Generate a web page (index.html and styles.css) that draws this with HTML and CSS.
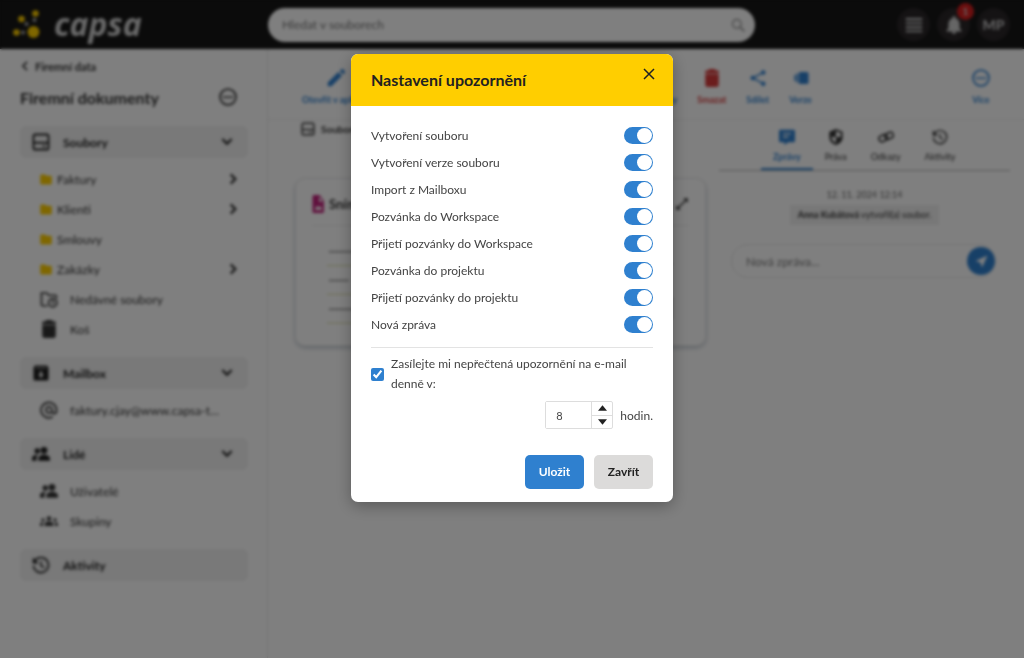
FILE: index.html
```html
<!DOCTYPE html>
<html lang="cs">
<head>
    <meta charset="UTF-8">
    <meta name="viewport" content="width=device-width, initial-scale=1.0">
    <title>Capsa – Nastavení upozornění</title>
    <link rel="stylesheet" href="styles.css">
</head>
<body>
    <!-- shared icons -->
    <svg class="sprite" aria-hidden="true">
        <symbol id="i-down" viewBox="0 0 24 24"><path d="M4 7l8 8 8-8" fill="none" stroke="currentColor" stroke-width="3.5"/></symbol>
        <symbol id="i-right" viewBox="0 0 24 24"><path d="M8 4l8 8-8 8" fill="none" stroke="currentColor" stroke-width="4"/></symbol>
        <symbol id="i-left" viewBox="0 0 24 24"><path d="M17 2L7 12l10 10" fill="none" stroke="currentColor" stroke-width="4"/></symbol>
        <symbol id="i-more" viewBox="0 0 24 24"><circle cx="12" cy="12" r="10.5" fill="none" stroke="currentColor" stroke-width="2.4"/><path d="M6 10.5h3v3H6zM10.500 10.500h3v3h-3zM15 10.500h3v3h-3z"/></symbol>
        <symbol id="i-drive" viewBox="0 0 24 24"><rect x="2" y="2" width="20" height="20" rx="2.500" fill="none" stroke="currentColor" stroke-width="2.500"/><path d="M2 13h20" stroke="currentColor" stroke-width="2.500"/><path d="M14 16.500h4v2h-4z"/></symbol>
        <symbol id="i-folder" viewBox="0 0 24 24"><path d="M10 2H3a2.500 2.500 0 0 0-2.500 2.500v15A2.500 2.500 0 0 0 3 22h18a2.500 2.500 0 0 0 2.500-2.500V7A2.500 2.500 0 0 0 21 4.500h-8z"/></symbol>
        <symbol id="i-recent" viewBox="0 0 24 24"><path d="M10 21H4a2 2 0 0 1-2-2V4h7l2.500 3H20a2 2 0 0 1 2 2v2" fill="none" stroke="currentColor" stroke-width="2.200"/><circle cx="17" cy="17" r="5.500" fill="none" stroke="currentColor" stroke-width="2.200"/><path d="M17 13.500V17l2 1.500" fill="none" stroke="currentColor" stroke-width="1.800"/></symbol>
        <symbol id="i-trash" viewBox="0 0 24 24"><path d="M8 0h8l1 2h4v4H3V2h4zM3 7h18v14a3 3 0 0 1-3 3H6a3 3 0 0 1-3-3z"/></symbol>
        <symbol id="i-mailbox" viewBox="0 0 24 24"><path fill-rule="evenodd" d="M4 2h16l2 3v15a2 2 0 0 1-2 2H4a2 2 0 0 1-2-2V5zM5 4.500h14v1H5zM10.500 10v4H8l4 4.500 4-4.500h-2.500v-4z"/></symbol>
        <symbol id="i-at" viewBox="0 0 24 24"><path d="M17 21a10.300 10.300 0 1 1 5-9v1.500a3 3 0 0 1-6 0V12a4 4 0 1 0-1.500 3" fill="none" stroke="currentColor" stroke-width="2.300"/></symbol>
        <symbol id="i-people" viewBox="0 0 24 24"><circle cx="16" cy="7" r="4.500"/><circle cx="7" cy="8" r="3.600"/><path d="M8.500 21v-3c0-3 4-5 7.500-5s8 2 8 5v3zM0 21v-3c0-3 3-5 8-5-1.500 1.200-2 3-2 5v3z"/></symbol>
        <symbol id="i-groups" viewBox="0 0 24 24"><circle cx="12" cy="8.500" r="3"/><circle cx="4" cy="10.500" r="2.200"/><circle cx="20" cy="10.500" r="2.200"/><path d="M6 18.500v-2c0-2.500 3-4 6-4s6 1.500 6 4v2zM0 18.500v-2c0-2 2-3 4.500-3-.6 1-.8 2-.8 5zM24 18.500v-2c0-2-2-3-4.500-3 .6 1 .8 2 .8 5z"/></symbol>
        <symbol id="i-history" viewBox="0 0 24 24"><path d="M4 6a10 10 0 1 1-2 7" fill="none" stroke="currentColor" stroke-width="2.200"/><path d="M1 2v8h8z"/><path d="M12 7v6l4.500 2.500" fill="none" stroke="currentColor" stroke-width="2"/></symbol>
    </svg>

    <header class="topbar">
        <a class="logo" href="#">
            <svg class="logo-mark" viewBox="0 0 28 30" aria-hidden="true">
                <g fill="#ffce00"><circle cx="21" cy="22" r="6"/><circle cx="9" cy="9" r="3.300"/><circle cx="23" cy="3.500" r="3.300"/><circle cx="4" cy="22.500" r="3.300"/></g>
                <g fill="#aaa"><circle cx="14" cy="14" r="2"/><circle cx="22" cy="10" r="2"/><circle cx="10.500" cy="22.500" r="2"/></g>
            </svg>
            <span class="logo-text">capsa</span>
        </a>
        <form class="search">
            <input type="search" placeholder="Hledat v souborech" aria-label="Hledat v souborech">
            <svg class="icon" viewBox="0 0 24 24" aria-hidden="true"><circle cx="10" cy="10" r="7.500" fill="none" stroke="currentColor" stroke-width="2.500"/><path d="M15.500 15.500L23 23" stroke="currentColor" stroke-width="3"/></svg>
        </form>
        <div class="user-actions">
            <button class="round" aria-label="Menu"><svg viewBox="0 0 24 24"><path d="M1 4h22M1 9.500h22M1 15h22M1 20.500h22" stroke="currentColor" stroke-width="2.500"/></svg></button>
            <button class="round" aria-label="Upozornění"><svg viewBox="0 0 24 24"><path d="M12 24a3 3 0 0 0 3-3H9a3 3 0 0 0 3 3zm7.500-7.500V11c0-4-2-7-5.500-8V2a2 2 0 0 0-4 0v1C6.500 4 4.500 7 4.500 11v5.500L2 19v1.500h20V19z"/></svg><span class="badge">1</span></button>
            <button class="round">MP</button>
        </div>
    </header>

    <div class="layout">
        <aside class="sidebar">
            <a class="back" href="#"><svg class="icon small"><use href="#i-left"/></svg>Firemní data</a>
            <div class="sidebar-title">
                <h1>Firemní dokumenty</h1>
                <button class="plain" aria-label="Více"><svg class="icon big"><use href="#i-more"/></svg></button>
            </div>
            <nav>
                <button class="section"><svg class="icon big"><use href="#i-drive"/></svg><span>Soubory</span><svg class="arrow"><use href="#i-down"/></svg></button>
                <ul>
                    <li><a class="folder" href="#"><svg><use href="#i-folder"/></svg><span>Faktury</span><svg class="arrow"><use href="#i-right"/></svg></a></li>
                    <li><a class="folder" href="#"><svg><use href="#i-folder"/></svg><span>Klienti</span><svg class="arrow"><use href="#i-right"/></svg></a></li>
                    <li><a class="folder" href="#"><svg><use href="#i-folder"/></svg><span>Smlouvy</span></a></li>
                    <li><a class="folder" href="#"><svg><use href="#i-folder"/></svg><span>Zakázky</span><svg class="arrow"><use href="#i-right"/></svg></a></li>
                    <li><a href="#"><svg class="icon big"><use href="#i-recent"/></svg><span>Nedávné soubory</span></a></li>
                    <li><a href="#"><svg class="icon big"><use href="#i-trash"/></svg><span>Koš</span></a></li>
                </ul>
                <button class="section"><svg class="icon big"><use href="#i-mailbox"/></svg><span>Mailbox</span><svg class="arrow"><use href="#i-down"/></svg></button>
                <ul>
                    <li><a href="#"><svg class="icon big"><use href="#i-at"/></svg><span>faktury.cjay@www.capsa-test.cz</span></a></li>
                </ul>
                <button class="section"><svg class="icon big"><use href="#i-people"/></svg><span>Lidé</span><svg class="arrow"><use href="#i-down"/></svg></button>
                <ul>
                    <li><a href="#"><svg class="icon big"><use href="#i-people"/></svg><span>Uživatelé</span></a></li>
                    <li><a href="#"><svg class="icon big"><use href="#i-groups"/></svg><span>Skupiny</span></a></li>
                </ul>
                <button class="section"><svg class="icon big"><use href="#i-history"/></svg><span>Aktivity</span></button>
            </nav>
        </aside>

        <div class="content">
            <div class="toolbar">
                <button class="tool open"><svg viewBox="0 0 24 24"><path d="M1 18L15 4l5 5L6 23H1zM17 2.500L19 .8a2 2 0 0 1 3 0L23.500 3a2 2 0 0 1 0 2.500L21.500 7z"/></svg>Otevřít v aplikaci</button>
                <button class="tool"><svg viewBox="0 0 24 24"><path d="M2 3h10v10H2z"/></svg>Štítky</button>
                <button class="tool danger"><svg><use href="#i-trash"/></svg>Smazat</button>
                <button class="tool"><svg viewBox="0 0 24 24"><circle cx="5" cy="12" r="3"/><circle cx="19" cy="4.500" r="3"/><circle cx="19" cy="19.500" r="3"/><path d="M19 4.500L5 12l14 7.500" fill="none" stroke="currentColor" stroke-width="2"/></svg>Sdílet</button>
                <button class="tool"><svg viewBox="0 0 24 24"><rect x="9" y="4" width="13" height="16" rx="2"/><path d="M6 6h2v12H6zM3 8h2v8H3z"/></svg>Verze</button>
                <button class="tool more"><svg><use href="#i-more"/></svg>Více</button>
            </div>
            <div class="columns">
                <main class="files">
                    <div class="crumb"><svg class="icon"><use href="#i-drive"/></svg>Soubory</div>
                    <article class="card">
                        <div class="card-head">
                            <svg class="image-file" viewBox="0 0 24 24" preserveAspectRatio="none"><path fill-rule="evenodd" d="M3 0h11l8 8v14a2 2 0 0 1-2 2H3a2 2 0 0 1-2-2V2a2 2 0 0 1 2-2zM13 2v7h7zM5 20h14l-4-6-3 3-3-3z"/></svg>
                            <h2>Snímek</h2>
                            <button class="plain" aria-label="Zvětšit"><svg class="expand" viewBox="0 0 24 24"><path d="M5 19L19 5" stroke="currentColor" stroke-width="2.500"/><path d="M14 2h8v8zM2 14v8h8z"/></svg></button>
                        </div>
                        <svg class="preview" viewBox="0 0 380 100" preserveAspectRatio="none" aria-hidden="true">
                            <path d="M17 26h70M17 55h20M17 84h70" stroke="#aaa" stroke-width="2"/>
                            <path d="M15 40h330M15 69h330M15 98h330" stroke="#d9dca0"/>
                            <path d="M342 48l22-12-12 34zM355 72h9v22h-9z" fill="#ddd"/>
                            <g fill="#2b4a80"><circle cx="346" cy="20" r="3"/><circle cx="346" cy="30" r="3"/><circle cx="346" cy="49" r="3"/><circle cx="346" cy="59" r="3"/><circle cx="346" cy="79" r="4"/><circle cx="346" cy="89" r="3"/></g>
                        </svg>
                    </article>
                </main>
                <section class="detail">
                    <div class="tabs">
                        <button class="tab active"><svg viewBox="0 0 24 24"><path fill-rule="evenodd" d="M2 1h20a2 2 0 0 1 2 2v15a2 2 0 0 1-2 2h-8l-6 4v-4H2a2 2 0 0 1-2-2V3a2 2 0 0 1 2-2zM6 6v2h12V6zM6 11v2h8v-2z"/></svg>Zprávy</button>
                        <button class="tab"><svg viewBox="0 0 24 24"><path fill-rule="evenodd" d="M12 0l10 4v8c0 6-4 10-10 12C6 22 2 18 2 12V4zm0 3v9H5c.5 4 3 7 7 8.500V12h7V6z"/></svg>Práva</button>
                        <button class="tab"><svg viewBox="0 0 24 24"><g fill="none" stroke="currentColor" stroke-width="2.500"><rect x="1" y="9" width="13" height="9" rx="4.500" transform="rotate(-25 8 13)"/><rect x="10" y="6" width="13" height="9" rx="4.500" transform="rotate(-25 16 10)"/></g></svg>Odkazy</button>
                        <button class="tab"><svg><use href="#i-history"/></svg>Aktivity</button>
                    </div>
                    <time class="date" datetime="2024-11-12T12:14">12. 11. 2024 12:14</time>
                    <p class="event"><strong>Anna Kubátová</strong> vytvořil(a) soubor.</p>
                    <form class="message">
                        <input type="text" placeholder="Nová zpráva..." aria-label="Nová zpráva">
                        <button type="button" aria-label="Odeslat"><svg viewBox="0 0 24 24"><path d="M23 1L1 11l9 3 3 9z"/></svg></button>
                    </form>
                </section>
            </div>
        </div>
    </div>

    <div class="overlay">
        <div class="modal" role="dialog" aria-modal="true" aria-labelledby="modal-title">
            <div class="modal-head">
                <h2 id="modal-title">Nastavení upozornění</h2>
                <button class="plain close" aria-label="Zavřít okno"><svg viewBox="0 0 12 12"><path d="M1 1l10 10M11 1L1 11" stroke="currentColor" stroke-width="1.500"/></svg></button>
            </div>
            <form class="modal-body">
                <div class="switches">
                    <label>Vytvoření souboru<input type="checkbox" class="switch" checked></label>
                    <label>Vytvoření verze souboru<input type="checkbox" class="switch" checked></label>
                    <label>Import z Mailboxu<input type="checkbox" class="switch" checked></label>
                    <label>Pozvánka do Workspace<input type="checkbox" class="switch" checked></label>
                    <label>Přijetí pozvánky do Workspace<input type="checkbox" class="switch" checked></label>
                    <label>Pozvánka do projektu<input type="checkbox" class="switch" checked></label>
                    <label>Přijetí pozvánky do projektu<input type="checkbox" class="switch" checked></label>
                    <label>Nová zpráva<input type="checkbox" class="switch" checked></label>
                </div>
                <label class="email"><input type="checkbox" checked><span>Zasílejte mi nepřečtená upozornění na e-mail denně v:</span></label>
                <div class="hour">
                    <div class="spinner">
                        <input type="text" inputmode="numeric" id="hour" value="8">
                        <div class="steps">
                            <button type="button" aria-label="Více hodin"><svg viewBox="0 0 10 6"><path d="M5 0l5 6H0z"/></svg></button>
                            <button type="button" aria-label="Méně hodin"><svg viewBox="0 0 10 6"><path d="M0 0h10L5 6z"/></svg></button>
                        </div>
                    </div>
                    <label for="hour">hodin.</label>
                </div>
                <div class="buttons">
                    <button type="button" class="btn primary">Uložit</button>
                    <button type="button" class="btn">Zavřít</button>
                </div>
            </form>
        </div>
    </div>
</body>
</html>
```
FILE: styles.css
```css
* {
    box-sizing: border-box;
}
body {
    margin: 0;
    min-height: 100vh;
    display: flex;
    flex-direction: column;
    background: #fff;
    color: #333;
    font-family: Lato, "Noto Sans", sans-serif;
    font-size: 12px;
}
button, input {
    font: inherit;
    color: inherit;
}
button {
    border: 0;
    padding: 0;
    background: none;
    cursor: pointer;
}
a {
    color: inherit;
    text-decoration: none;
}
svg {
    fill: currentColor;
    flex: none;
}
h1, h2, p, ul {
    margin: 0;
    padding: 0;
}
.sprite {
    display: none;
}
.icon {
    width: 14px;
    height: 14px;
}
.icon.small {
    width: 10px;
    height: 10px;
}
.icon.big {
    width: 18px;
    height: 18px;
}
.plain {
    display: flex;
}

/* top bar */
.topbar {
    display: grid;
    grid-template-columns: 256px minmax(0, 487px) 1fr;
    align-items: center;
    height: 49px;
    padding: 0 14px 0 12px;
    background: #161616;
}
.logo {
    display: flex;
    align-items: center;
    gap: 13px;
    color: #d4d4d4;
}
.logo-mark {
    width: 29px;
    height: 30px;
}
.logo-text {
    padding-bottom: 2px;
    font-family: "Open Sans", sans-serif;
    font-size: 32px;
    font-weight: 700;
    font-style: italic;
    line-height: 38px;
}
.search {
    display: flex;
    align-items: center;
    height: 34px;
    padding: 0 10px 0 14px;
    border-radius: 17px;
    background: #fff;
    color: #999;
}
.search input {
    flex: 1;
    min-width: 0;
    border: 0;
    background: none;
    outline: none;
    padding: 0;
}
.search input::placeholder,
.message input::placeholder {
    color: #777;
}
.user-actions {
    display: flex;
    justify-content: flex-end;
    gap: 7px;
}
.round {
    position: relative;
    display: flex;
    align-items: center;
    justify-content: center;
    width: 33px;
    height: 33px;
    border-radius: 50%;
    background: #2a2628;
    color: #ccc;
    font-size: 14px;
    font-weight: 700;
}
.round svg {
    width: 18px;
    height: 18px;
}
.badge {
    position: absolute;
    top: -5px;
    right: -4px;
    width: 17px;
    border-radius: 50%;
    background: #d81e1e;
    font-size: 10px;
    line-height: 17px;
}

/* sidebar */
.layout {
    flex: 1;
    display: flex;
}
.sidebar {
    flex: none;
    width: 268px;
    padding: 8px 19px 8px 20px;
    border-right: 1px solid #e6e6e6;
}
.back {
    display: flex;
    align-items: center;
    gap: 5px;
    height: 18px;
    font-size: 11px;
    font-weight: 700;
}
.sidebar-title {
    display: flex;
    align-items: center;
    justify-content: space-between;
    height: 44px;
    padding-right: 11px;
}
.sidebar-title h1 {
    font-size: 16px;
}
.sidebar nav {
    padding-top: 7px;
}
.section {
    display: flex;
    align-items: center;
    gap: 13px;
    width: 100%;
    height: 32px;
    padding: 0 14px 0 12px;
    border-radius: 6px;
    background: #f2f2f2;
    font-weight: 700;
    color: #1d1d1d;
}
.arrow {
    width: 14px;
    height: 14px;
    margin-left: auto;
}
.sidebar ul {
    padding: 6px 8px 13px 20px;
    list-style: none;
}
.sidebar li a {
    display: flex;
    align-items: center;
    gap: 12px;
    height: 30px;
}
.sidebar li span {
    overflow: hidden;
    padding-right: 16px;
    text-overflow: ellipsis;
    white-space: nowrap;
}
.sidebar li .folder {
    gap: 5px;
}
.folder svg:first-child {
    width: 12px;
    height: 13px;
    color: #ffce00;
}

/* toolbar */
.content {
    flex: 1;
    min-width: 0;
}
.toolbar {
    display: flex;
    gap: 20px;
    height: 71px;
    padding: 20px 34px 0 34px;
    border-bottom: 1px solid #f0f0f0;
}
.tool {
    display: flex;
    flex-direction: column;
    align-items: center;
    gap: 7px;
    color: #2f80cf;
    font-size: 9px;
    font-weight: 700;
}
.tool svg {
    width: 18px;
    height: 18px;
}
.tool.open {
    margin-right: 264px;
}
.tool.more {
    margin-left: auto;
}
.tool.danger {
    color: #d63a3a;
}

/* file card */
.columns {
    display: flex;
}
.files {
    flex: 1;
    min-width: 0;
    padding: 0 13px 0 27px;
}
.crumb {
    display: flex;
    align-items: center;
    gap: 6px;
    height: 18px;
    padding-left: 6px;
    font-size: 10px;
    font-weight: 700;
}
.card {
    margin-top: 40px;
    padding: 0 16px 20px;
    border: 1px solid #e8e8e8;
    border-radius: 10px;
    box-shadow: 0 2px 4px #c0c8d0;
}
.card-head {
    display: flex;
    align-items: center;
    gap: 4px;
    height: 47px;
    padding-top: 4px;
    border-bottom: 1px solid #ececec;
}
.card-head h2 {
    flex: 1;
    font-size: 13px;
}
.image-file {
    width: 13px;
    height: 18px;
    color: #c0207a;
}
.expand {
    width: 14px;
    height: 14px;
}
.preview {
    display: block;
    width: 100%;
    height: 99px;
}

/* detail panel */
.detail {
    width: 305px;
    padding-right: 14px;
}
.tabs {
    display: flex;
    padding-left: 42px;
    border-bottom: 1px solid #b0b0b0;
}
.tab {
    display: flex;
    flex-direction: column;
    align-items: center;
    gap: 6px;
    height: 50px;
    padding: 9px 12px 0;
    border-bottom: 2px solid transparent;
    font-size: 9px;
}
.tab svg {
    width: 16px;
    height: 16px;
}
.tab.active {
    border-bottom-color: #2f80cf;
    color: #2f80cf;
    font-weight: 700;
}
.date {
    display: block;
    padding: 18px 0 4px;
    color: #666;
    font-size: 9px;
    line-height: 12px;
    text-align: center;
}
.event {
    width: fit-content;
    margin: 0 auto;
    padding: 0 8px;
    background: #f0f0f0;
    font-size: 9px;
    line-height: 20px;
}
.message {
    display: flex;
    align-items: center;
    height: 34px;
    margin: 19px 14px 0 12px;
    padding-left: 14px;
    border: 1px solid #e6e6e6;
    border-radius: 17px;
}
.message input {
    flex: 1;
    min-width: 0;
    padding: 0;
    border: 0;
    outline: none;
}
.message button {
    display: flex;
    align-items: center;
    justify-content: center;
    width: 28px;
    height: 28px;
    border-radius: 50%;
    background: #2f80cf;
    color: #fff;
}
.message svg {
    width: 13px;
    height: 13px;
}

/* modal */
.overlay {
    position: fixed;
    inset: 0;
    display: flex;
    justify-content: center;
    align-items: flex-start;
    padding: 54px 20px 20px;
    background: rgba(0, 0, 0, 0.5);
    backdrop-filter: blur(1px) blur(1px);
}
.modal {
    width: 322px;
    overflow: hidden;
    border-radius: 7px;
    background: #fff;
    box-shadow: 0 4px 16px rgba(0, 0, 0, 0.3);
}
.modal-head {
    display: flex;
    align-items: center;
    justify-content: space-between;
    height: 52px;
    padding: 0 18px 2px 20px;
    background: #ffce00;
    color: #222;
}
.modal-head h2 {
    font-size: 16px;
}
.close {
    padding-bottom: 10px;
}
.close svg {
    width: 12px;
    height: 12px;
}
.modal-body {
    padding: 16px 20px 13px;
    color: #444;
}
.switches {
    padding-bottom: 9px;
    border-bottom: 1px solid #e3e3e3;
}
.switches label {
    display: flex;
    align-items: center;
    justify-content: space-between;
    height: 27px;
}
.switch {
    appearance: none;
    display: flex;
    width: 29px;
    height: 17px;
    margin: 0;
    padding: 1px;
    border-radius: 9px;
    background: #bbb;
}
.switch::before {
    content: "";
    width: 15px;
    height: 15px;
    border-radius: 50%;
    background: #fff;
}
.switch:checked {
    justify-content: flex-end;
    background: #2f80cf;
}
.email {
    display: flex;
    align-items: center;
    gap: 7px;
    padding-top: 6px;
    line-height: 20px;
}
.email input {
    flex: none;
    width: 13px;
    height: 13px;
    margin: 0;
    accent-color: #2f80cf;
}
.hour {
    display: flex;
    align-items: center;
    justify-content: flex-end;
    gap: 7px;
    padding-top: 7px;
}
.spinner {
    display: flex;
    width: 68px;
    height: 28px;
    border: 1px solid #ddd;
    border-radius: 2px;
}
.spinner input {
    flex: 1;
    min-width: 0;
    padding: 0 10px;
    border: 0;
    font-size: 11px;
}
.steps {
    display: grid;
    width: 21px;
    border-left: 1px solid #ddd;
}
.steps button {
    display: flex;
    align-items: center;
    justify-content: center;
    color: #222;
}
.steps button + button {
    border-top: 1px solid #ddd;
}
.steps svg {
    width: 9px;
    height: 6px;
}
.buttons {
    display: flex;
    justify-content: flex-end;
    gap: 10px;
    padding-top: 26px;
}
.btn {
    min-width: 59px;
    height: 34px;
    padding-bottom: 2px;
    border-radius: 5px;
    background: #dcdbda;
    color: #222;
    font-weight: 700;
}
.btn.primary {
    background: #2f80cf;
    color: #fff;
}
```
